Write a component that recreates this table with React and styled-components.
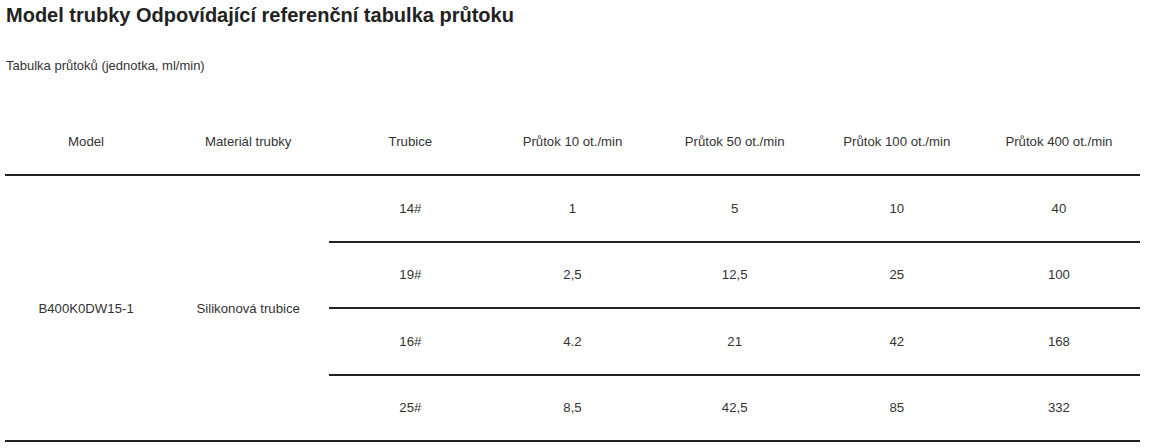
import styled, { createGlobalStyle } from 'styled-components'

const GlobalStyle = createGlobalStyle`
    body {
        margin: 0;
        background: #fff;
        font-family: 'Liberation Sans', Arial, sans-serif;
        color: #333;
    }
`

const Page = styled.div`
    padding: 3px 9px 0 5px;
`

const Title = styled.h2`
    margin: 0 0 0 1px;
    font-size: 20px;
    line-height: 25px;
    font-weight: 700;
    color: #222;
`

const Note = styled.p`
    margin: 30px 0 0 1px;
    font-size: 13px;
    line-height: 16px;
`

const Table = styled.table`
    width: 1135px;
    margin-top: 34px;
    border-collapse: collapse;
    table-layout: fixed;
    font-size: 13.2px;
`

const Head = styled.th`
    height: 66px;
    padding: 0;
    font-weight: 400;
    text-align: center;
    border-bottom: 2px solid #222;
`

const Cell = styled.td`
    height: 64.5px;
    padding: 0;
    text-align: center;
    border-bottom: 2px solid #222;
`

const columns = [
    'Model',
    'Materiál trubky',
    'Trubice',
    'Průtok 10 ot./min',
    'Průtok 50 ot./min',
    'Průtok 100 ot./min',
    'Průtok 400 ot./min',
]

const rows = [
    ['14#', '1', '5', '10', '40'],
    ['19#', '2,5', '12,5', '25', '100'],
    ['16#', '4.2', '21', '42', '168'],
    ['25#', '8,5', '42,5', '85', '332'],
]

export default function App() {
    return (
        <Page>
            <GlobalStyle />
            <Title>Model trubky Odpovídající referenční tabulka průtoku</Title>
            <Note>Tabulka průtoků (jednotka, ml/min)</Note>
            <Table>
                <thead>
                    <tr>
                        {columns.map((c) => (
                            <Head key={c}>{c}</Head>
                        ))}
                    </tr>
                </thead>
                <tbody>
                    {rows.map((r, i) => (
                        <tr key={r[0]}>
                            {i === 0 && (
                                <>
                                    <Cell rowSpan={rows.length}>B400K0DW15-1</Cell>
                                    <Cell rowSpan={rows.length}>Silikonová trubice</Cell>
                                </>
                            )}
                            {r.map((v, j) => (
                                <Cell key={j}>{v}</Cell>
                            ))}
                        </tr>
                    ))}
                </tbody>
            </Table>
        </Page>
    )
}
